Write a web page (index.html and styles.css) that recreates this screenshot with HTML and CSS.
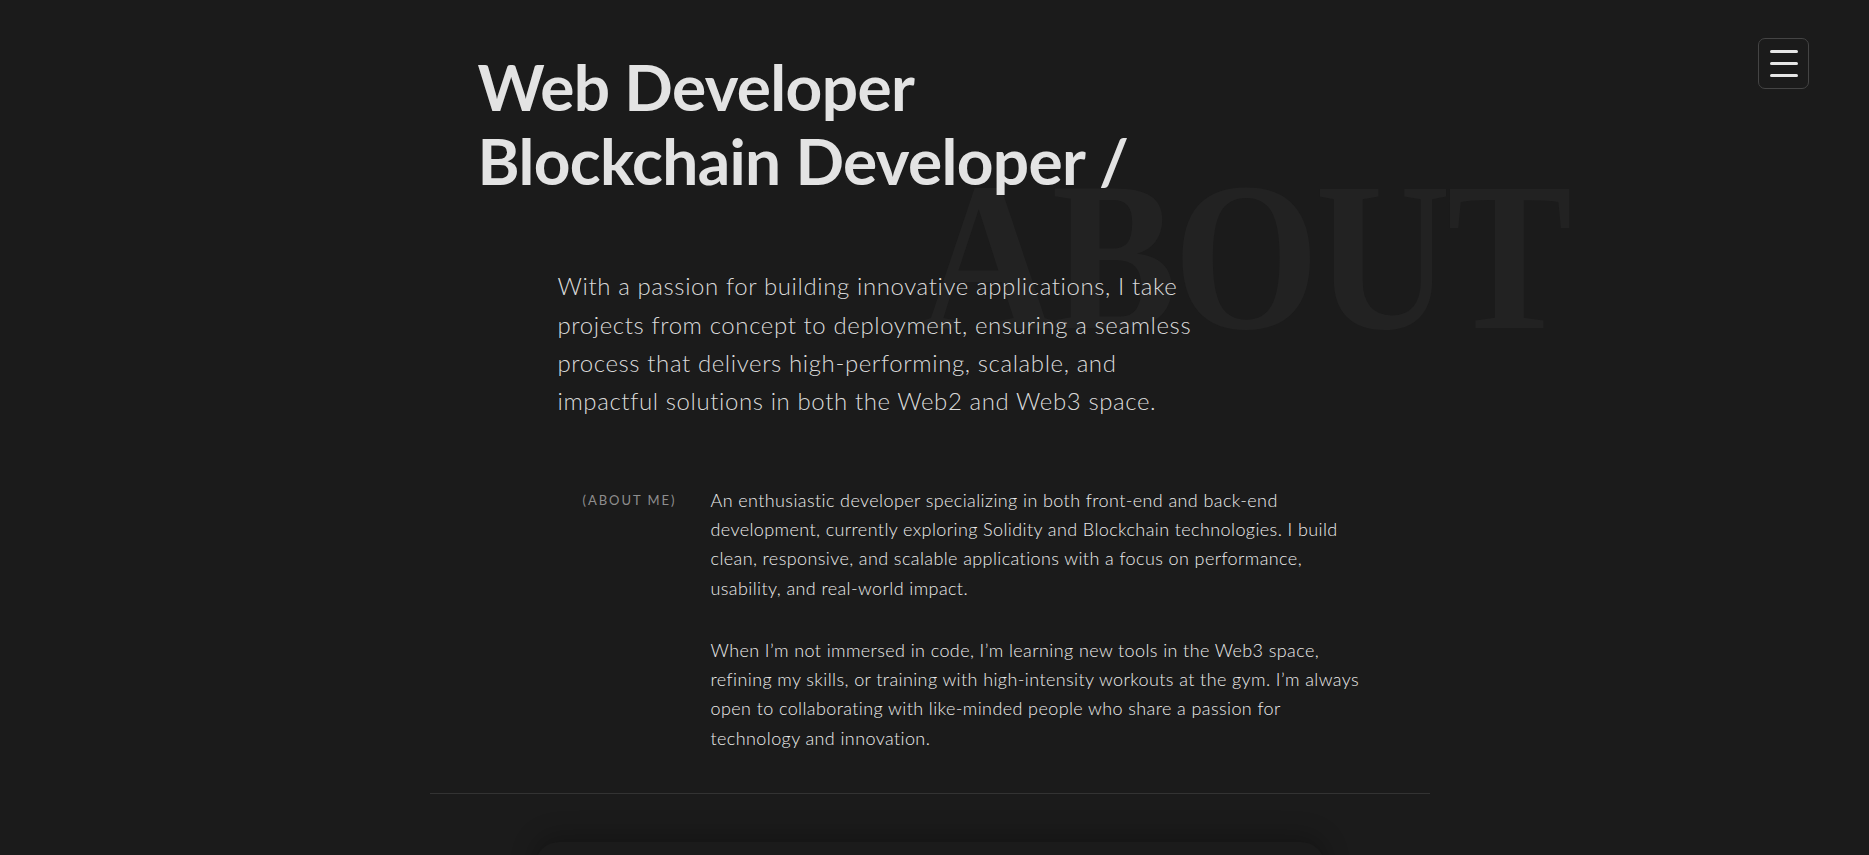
FILE: index.html
```html
<!DOCTYPE html>
<html lang="en">
<head>
<meta charset="utf-8">
<title>About</title>
<link rel="stylesheet" href="styles.css">
</head>
<body>
<button class="menu-btn" aria-label="Open menu"><span></span><span></span><span></span></button>
<main class="page">
  <section class="about">
    <div class="watermark" aria-hidden="true">ABOUT</div>
    <h1 class="title">Web Developer<br>Blockchain Developer /</h1>
    <p class="lead">With a passion for building innovative applications, I take projects from concept to deployment, ensuring a seamless process that delivers high-performing, scalable, and impactful solutions in both the Web2 and Web3 space.</p>
    <div class="bio">
      <span class="bio-label">(ABOUT ME)</span>
      <div class="bio-text">
        <p>An enthusiastic developer specializing in both front-end and back-end development, currently exploring Solidity and Blockchain technologies. I build clean, responsive, and scalable applications with a focus on performance, usability, and real-world impact.</p>
        <p>When I’m not immersed in code, I’m learning new tools in the Web3 space, refining my skills, or training with high-intensity workouts at the gym. I’m always open to collaborating with like-minded people who share a passion for technology and innovation.</p>
      </div>
    </div>
  </section>
  <hr class="divider">
  <section class="next-card"></section>
</main>
</body>
</html>
```
FILE: styles.css
```css
* { box-sizing: border-box; }
html, body { margin: 0; padding: 0; }
body {
  background: #1b1b1b;
  color: #e2e2e2;
  font-family: "Lato", "Open Sans", sans-serif;
  padding-right: 10px;
  overflow: hidden;
  height: 855px;
}
.menu-btn {
  position: fixed;
  top: 38px;
  right: 60px;
  width: 51px;
  height: 51px;
  border: 1px solid #444;
  border-radius: 7px;
  background: #1b1b1b;
  display: flex;
  flex-direction: column;
  align-items: center;
  justify-content: center;
  gap: 9px;
  padding: 0;
  z-index: 10;
}
.menu-btn span {
  display: block;
  width: 28px;
  height: 3px;
  border-radius: 2px;
  background: #e6e6e6;
}
.page {
  max-width: 1000px;
  margin: 0 auto;
}
.about {
  position: relative;
  padding: 50px 0 40px 48px;
}
.watermark {
  position: absolute;
  left: 490px;
  top: 151px;
  font-family: "Liberation Serif", "Times New Roman", serif;
  font-weight: 700;
  font-size: 212px;
  line-height: 1;
  color: #222222;
  letter-spacing: -0.02em;
  transform: scaleX(0.885);
  transform-origin: left top;
  z-index: 0;
  white-space: nowrap;
  user-select: none;
}
.title, .lead, .bio { position: relative; z-index: 1; }
.title {
  margin: 0;
  font-size: 64px;
  line-height: 1.15;
  font-weight: 700;
  color: #e3e3e3;
  letter-spacing: -0.01em;
}
.lead {
  margin: 70px 0 0 80px;
  max-width: 660px;
  font-size: 24px;
  line-height: 1.6;
  font-weight: 300;
  letter-spacing: 0.6px;
  color: #dadada;
}
.bio {
  margin: 65px 0 0 105px;
  display: grid;
  grid-template-columns: 128px 660px;
  align-items: start;
}
.bio-label {
  font-size: 13px;
  line-height: 29.25px;
  letter-spacing: 0.15em;
  color: #8e8e8e;
}
.bio-text p {
  margin: 0 0 33px;
  font-size: 18px;
  line-height: 1.625;
  font-weight: 300;
  letter-spacing: 0.4px;
  color: #ececec;
}
.bio-text p:last-child { margin-bottom: 0; }
.divider {
  margin: 0;
  border: 0;
  height: 1px;
  background: #333333;
}
.next-card {
  margin: 48px auto 0;
  width: 790px;
  height: 300px;
  border-radius: 24px;
  background: #1b1b1b;
  box-shadow: 0 -6px 24px rgba(0, 0, 0, 0.25);
}
```
